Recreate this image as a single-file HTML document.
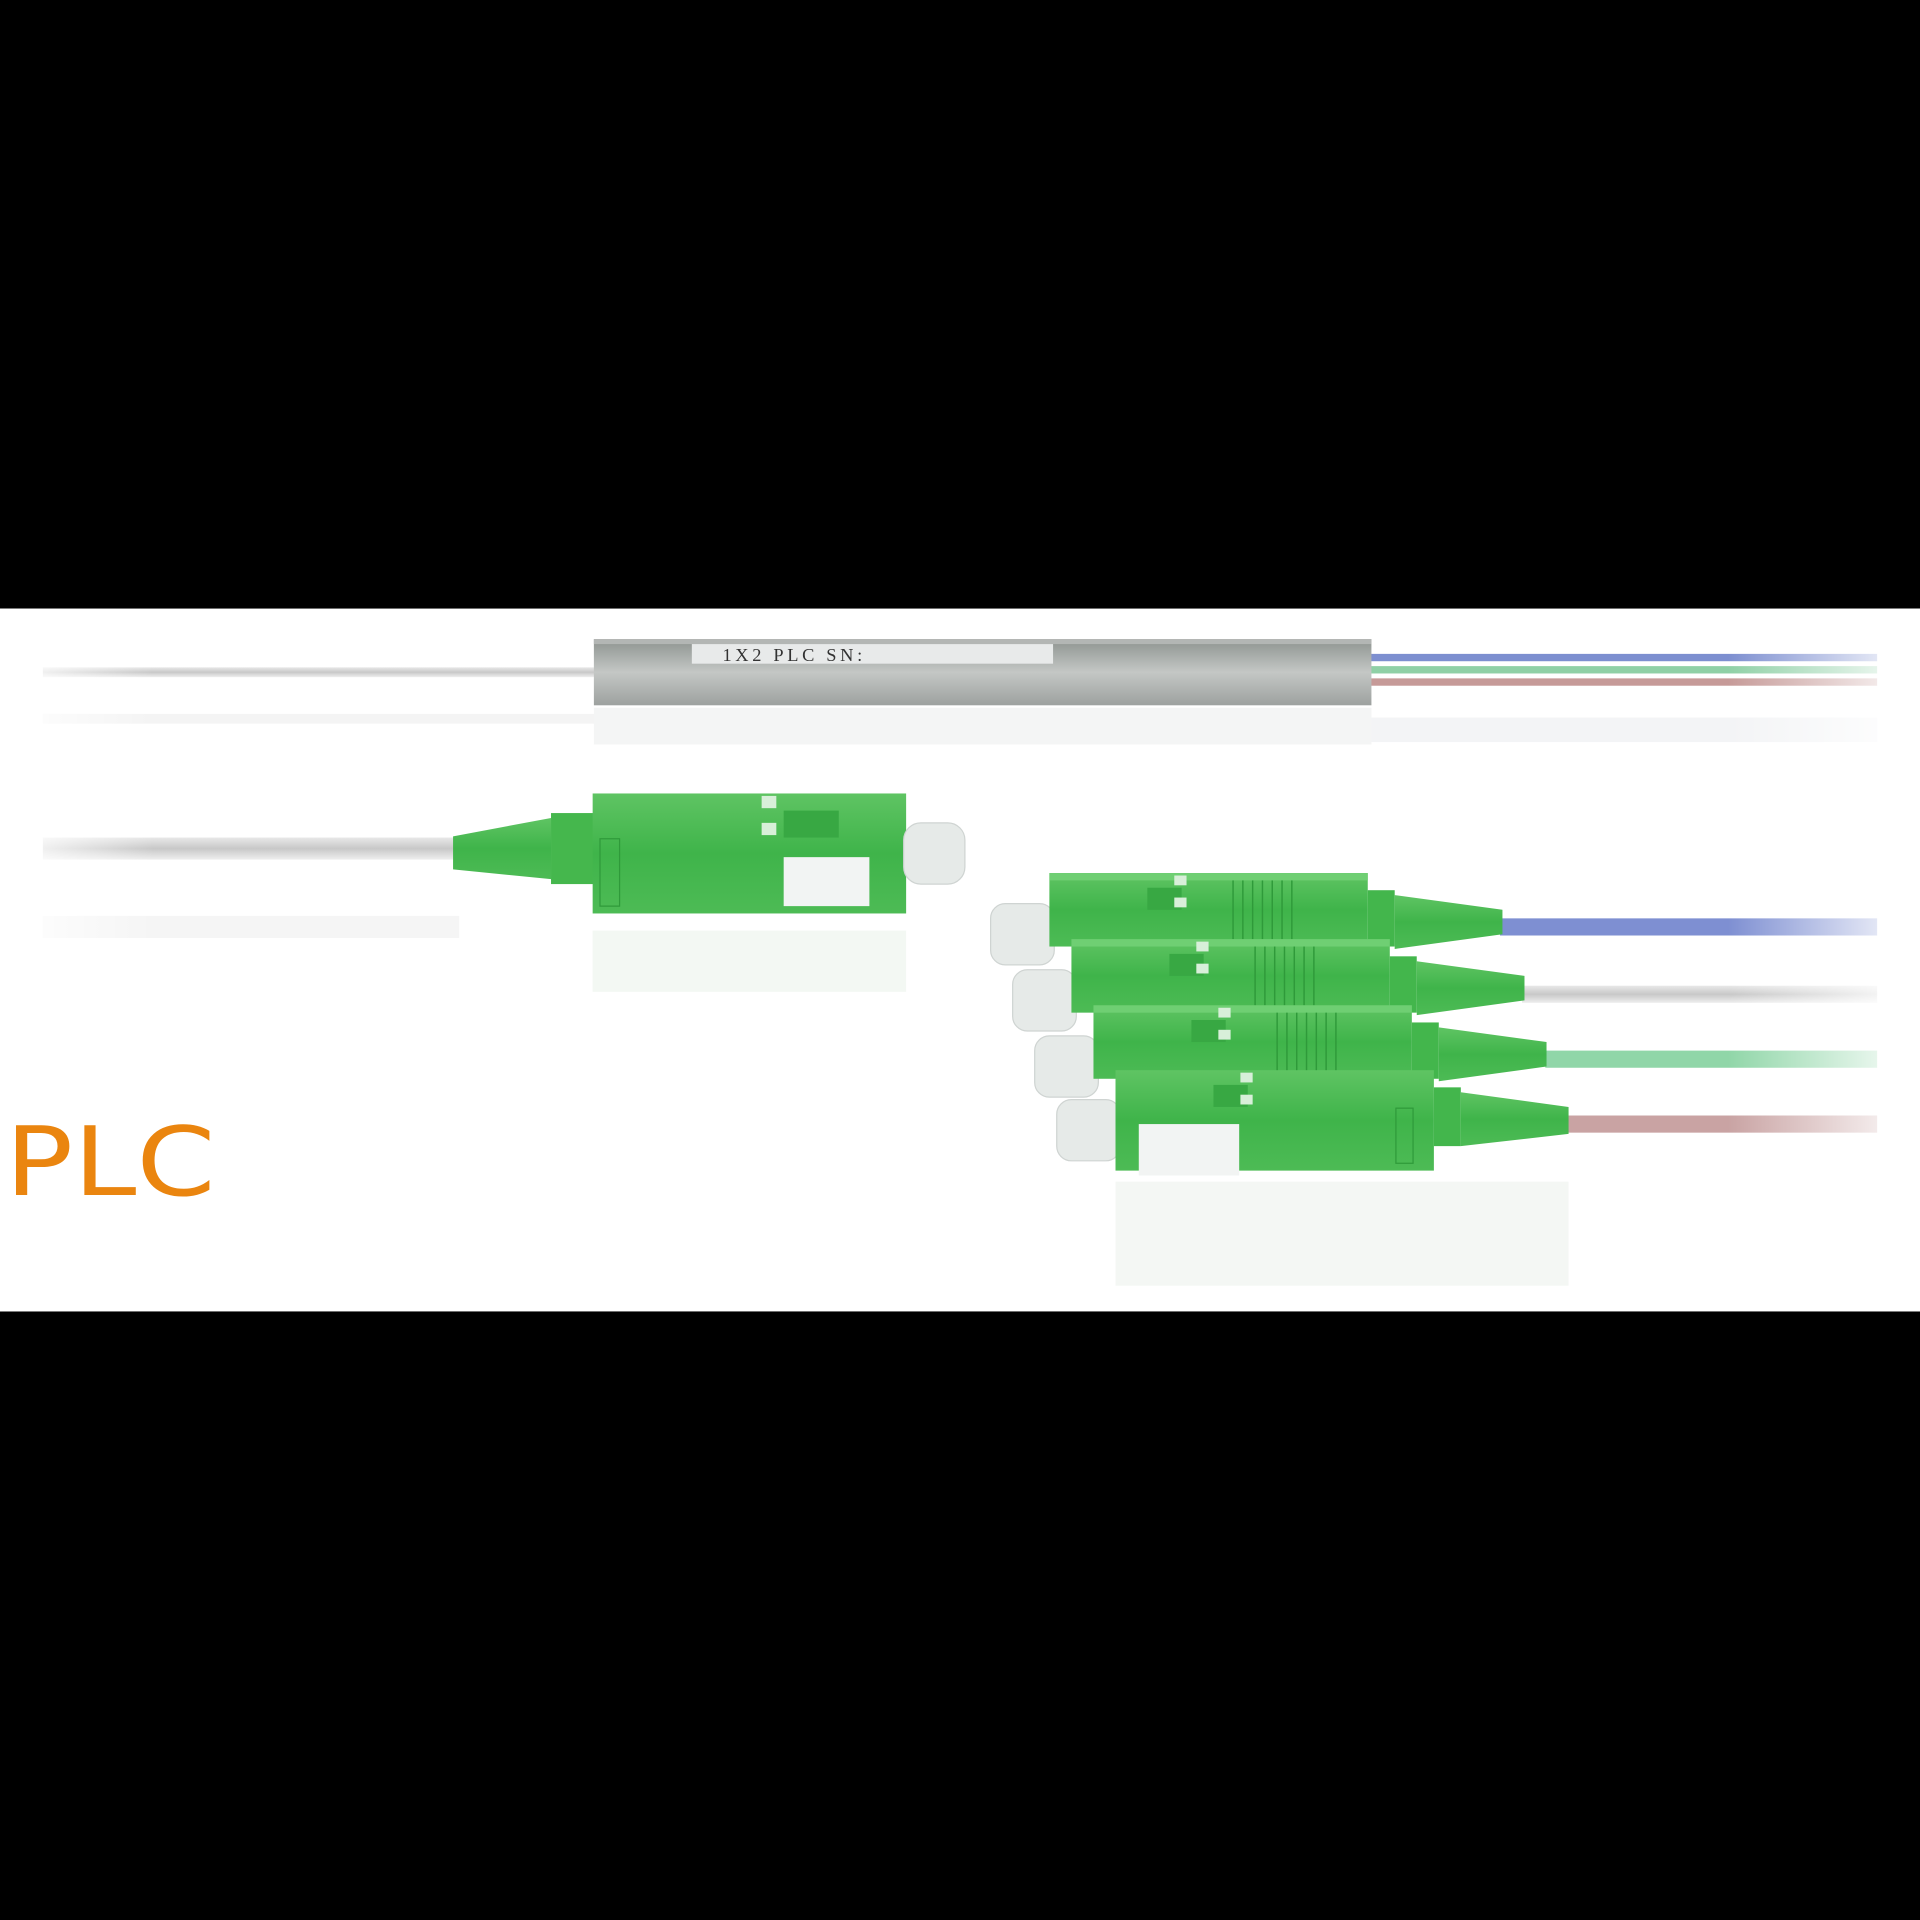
<!DOCTYPE html>
<html><head><meta charset="utf-8"><style>
html,body{margin:0;padding:0;background:#000;width:1920px;height:1920px;overflow:hidden}
svg{display:block}
</style></head><body>
<svg width="1920" height="1920" viewBox="0 0 1568 1568" xmlns="http://www.w3.org/2000/svg">
<defs>
<linearGradient id="fadeL" x1="0" x2="1"><stop offset="0" stop-color="#fff" stop-opacity="1"/><stop offset="0.08" stop-color="#fff" stop-opacity="0"/></linearGradient>
<linearGradient id="fadeR" x1="0" x2="1"><stop offset="0.9" stop-color="#fff" stop-opacity="0"/><stop offset="1" stop-color="#fff" stop-opacity="1"/></linearGradient>
<linearGradient id="box" x1="0" y1="0" x2="0" y2="1"><stop offset="0" stop-color="#8e938f"/><stop offset="0.2" stop-color="#a3a8a5"/><stop offset="0.5" stop-color="#c4c7c5"/><stop offset="1" stop-color="#9da19f"/></linearGradient>
<linearGradient id="fib" x1="0" y1="0" x2="0" y2="1"><stop offset="0" stop-color="#e8e8e8"/><stop offset="0.5" stop-color="#c8c8c8"/><stop offset="1" stop-color="#eee"/></linearGradient>
<linearGradient id="grn" x1="0" y1="0" x2="0" y2="1"><stop offset="0" stop-color="#5fc463"/><stop offset="0.5" stop-color="#3fb44a"/><stop offset="1" stop-color="#4dbb55"/></linearGradient>
<g id="conR">
 <rect x="-48" y="25" width="52" height="50" rx="12" fill="#e6eae8" stroke="#cfd4d2"/>
 <rect x="0" y="0" width="260" height="60" fill="url(#grn)"/>
 <rect x="0" y="0" width="260" height="6" fill="#6fcf73"/>
 <rect x="260" y="14" width="22" height="46" fill="#43b64c"/>
 <path d="M282 18 L370 30 L370 50 L282 62 Z" fill="url(#grn)"/>
 <rect x="80" y="12" width="28" height="18" fill="#38a843"/>
 <rect x="102" y="2" width="10" height="8" fill="#d8efd9"/>
 <rect x="102" y="20" width="10" height="8" fill="#d8efd9"/>
 <g stroke="#2f9a3a" stroke-width="1.2"><line x1="150" y1="6" x2="150" y2="56"/><line x1="158" y1="6" x2="158" y2="56"/><line x1="166" y1="6" x2="166" y2="56"/><line x1="174" y1="6" x2="174" y2="56"/><line x1="182" y1="6" x2="182" y2="56"/><line x1="190" y1="6" x2="190" y2="56"/><line x1="198" y1="6" x2="198" y2="56"/></g>
</g>
</defs>
<rect x="0" y="497" width="1568" height="574" fill="#fff"/>

<rect x="35" y="545" width="452" height="8" fill="url(#fib)"/>
<rect x="35" y="583" width="452" height="8" fill="#f4f4f4"/>
<rect x="1118" y="534" width="415" height="6" fill="#7d8fd0"/>
<rect x="1118" y="544" width="415" height="6" fill="#8fd0a6"/>
<rect x="1118" y="554" width="415" height="6" fill="#c69a98"/>
<rect x="1118" y="586" width="415" height="20" fill="#f3f4f6"/>
<rect x="485" y="522" width="635" height="54" fill="url(#box)"/>
<rect x="485" y="522" width="635" height="4" fill="#b3b6b4"/>
<rect x="565" y="526" width="295" height="16" fill="#e8eaea"/>
<text x="590" y="540" font-family="Liberation Serif, serif" font-size="15" fill="#333" letter-spacing="3">1X2  PLC  SN:</text>
<rect x="485" y="578" width="635" height="30" fill="#f4f5f5"/>

<rect x="35" y="684" width="340" height="18" fill="url(#fib)"/>
<rect x="35" y="748" width="340" height="18" fill="#f5f5f5"/>
<path d="M370 683 L450 668 L450 718 L370 710 Z" fill="url(#grn)"/>
<rect x="450" y="664" width="35" height="58" fill="#45b74d"/>
<rect x="484" y="648" width="256" height="98" fill="url(#grn)"/>
<rect x="622" y="650" width="12" height="10" fill="#d8efd9"/>
<rect x="622" y="672" width="12" height="10" fill="#d8efd9"/>
<rect x="640" y="662" width="45" height="22" fill="#38a843"/>
<rect x="738" y="672" width="50" height="50" rx="14" fill="#e6eae8" stroke="#cfd4d2"/>
<rect x="640" y="700" width="70" height="40" fill="#f2f4f3"/>
<rect x="490" y="685" width="16" height="55" fill="none" stroke="#2f9a3a"/>
<rect x="484" y="760" width="256" height="50" fill="#f3f8f3"/>

<rect x="1225" y="750" width="308" height="14" fill="#7e8fd2"/>
<rect x="1243" y="805" width="290" height="14" fill="url(#fib)"/>
<rect x="1262" y="858" width="271" height="14" fill="#90d6a8"/>
<rect x="1280" y="911" width="253" height="14" fill="#c9a3a3"/>

<rect x="911" y="965" width="370" height="85" fill="#f4f7f4"/>
<use href="#conR" x="857" y="713"/>
<use href="#conR" x="875" y="767"/>
<use href="#conR" x="893" y="821"/>
<!-- bottom connector, taller -->
<rect x="863" y="898" width="52" height="50" rx="12" fill="#e6eae8" stroke="#cfd4d2"/>
<rect x="911" y="874" width="260" height="82" fill="url(#grn)"/>
<rect x="1171" y="888" width="22" height="48" fill="#43b64c"/>
<path d="M1193 892 L1281 904 L1281 926 L1193 936 Z" fill="url(#grn)"/>
<rect x="991" y="886" width="28" height="18" fill="#38a843"/>
<rect x="1013" y="876" width="10" height="8" fill="#d8efd9"/>
<rect x="1013" y="894" width="10" height="8" fill="#d8efd9"/>
<rect x="930" y="918" width="82" height="42" fill="#f2f4f3"/>
<rect x="1140" y="905" width="14" height="45" fill="none" stroke="#2f9a3a"/>

<rect x="0" y="497" width="1568" height="574" fill="url(#fadeL)"/>
<rect x="0" y="497" width="1568" height="574" fill="url(#fadeR)"/>

<text x="4" y="976" font-family="DejaVu Sans, sans-serif" font-size="78" fill="#ea850f" textLength="172" lengthAdjust="spacingAndGlyphs">PLC</text>
</svg>
</body></html>
